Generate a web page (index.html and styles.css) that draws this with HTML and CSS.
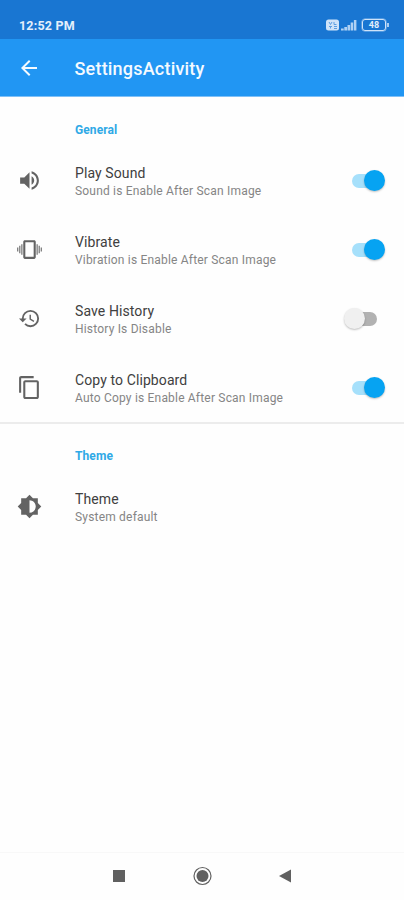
FILE: index.html
```
<!DOCTYPE html>
<html lang="en">
<head>
  <meta charset="UTF-8" />
  <meta name="viewport" content="width=device-width, initial-scale=1.0" />
  <title>SettingsActivity</title>
  <link rel="stylesheet" href="styles.css">
</head>
<body>
  <div class="statusbar">
    <span class="time">12:52 PM</span>
    <div class="status-icons">
      <svg class="volte" width="13" height="12" viewBox="0 0 13 12">
        <rect x="0" y="0.5" width="13" height="11" rx="2.5" fill="#cfe3f9"/>
        <path d="M3 3l1.500 2.500L6 3M8 3v2.500h2.500M3 7.500h3M4.500 7.500v2M8 9.500h3M8 7.500h3" fill="none" stroke="#5c9ee2" stroke-width="1"/>
      </svg>
      <svg class="signal" width="16" height="12" viewBox="0 0 16 12">
        <path d="M0 9.500h2.700V11.500H0zM3.300 8h2.700v3.500H3.300zM6.500 6h2.600v5.500H6.500zM9.700 3.500h2.500v8H9.700zM12.900 1h2.500v10.500h-2.500z" fill="#b0d1f4"/>
      </svg>
      <div class="battery">48</div>
    </div>
  </div>

  <div class="toolbar">
    <svg class="back" width="24" height="24" viewBox="0 0 24 24"><path d="M20 11H7.830l5.590-5.590L12 4l-8 8 8 8 1.410-1.410L7.830 13H20v-2z"/></svg>
    <h1>SettingsActivity</h1>
  </div>

  <div class="content">
    <h2>General</h2>
    <div class="row">
      <svg class="icon" viewBox="0 0 24 24"><path d="M3 9v6h4l5 5V4L7 9H3zm13.500 3c0-1.770-1.020-3.290-2.500-4.030v8.050c1.480-.73 2.500-2.250 2.500-4.020zM14 3.230v2.060c2.890.86 5 3.540 5 6.710s-2.110 5.850-5 6.710v2.060c4.010-.91 7-4.490 7-8.770s-2.990-7.860-7-8.770z"/></svg>
      <div class="text">
        <div class="title">Play Sound</div>
        <div class="summary">Sound is Enable After Scan Image</div>
      </div>
      <div class="switch on"></div>
    </div>
    <div class="row">
      <svg class="icon" viewBox="0 0 24 24">
        <path d="M16.500 3h-9C6.670 3 6 3.670 6 4.500v15c0 .83.670 1.500 1.500 1.500h9c.83 0 1.500-.67 1.500-1.500v-15c0-.83-.67-1.500-1.500-1.500zM16 19H8V5h8v14z"/>
        <path d="M0 10h1.300v4H0zM2 8.500h1.300v7H2zM4 7h1.300v10H4zM18.700 7H20v10h-1.300zM20.700 8.500H22v7h-1.300zM22.700 10H24v4h-1.300z" opacity="0.8"/>
      </svg>
      <div class="text">
        <div class="title">Vibrate</div>
        <div class="summary">Vibration is Enable After Scan Image</div>
      </div>
      <div class="switch on"></div>
    </div>
    <div class="row">
      <svg class="icon small" viewBox="0 0 24 24"><path d="M13 3a9 9 0 0 0-9 9H1l3.890 3.890.07.14L9 12H6c0-3.870 3.130-7 7-7s7 3.130 7 7-3.130 7-7 7c-1.930 0-3.680-.79-4.940-2.060l-1.420 1.420A8.954 8.954 0 0 0 13 21a9 9 0 0 0 0-18zm-1 5v5l4.280 2.540.72-1.210-3.500-2.080V8H12z"/></svg>
      <div class="text">
        <div class="title">Save History</div>
        <div class="summary">History Is Disable</div>
      </div>
      <div class="switch"></div>
    </div>
    <div class="row">
      <svg class="icon" viewBox="0 0 24 24"><path d="M16 1H4c-1.100 0-2 .9-2 2v14h2V3h12V1zm3 4H8c-1.100 0-2 .9-2 2v14c0 1.100.9 2 2 2h11c1.100 0 2-.9 2-2V7c0-1.100-.9-2-2-2zm0 16H8V7h11v14z"/></svg>
      <div class="text">
        <div class="title">Copy to Clipboard</div>
        <div class="summary">Auto Copy is Enable After Scan Image</div>
      </div>
      <div class="switch on"></div>
    </div>

    <div class="divider"></div>

    <h2 class="second">Theme</h2>
    <div class="row">
      <svg class="icon" viewBox="0 0 24 24"><path fill-rule="evenodd" d="M20 15.310L23.310 12 20 8.690V4h-4.690L12 .69 8.690 4H4v4.690L.69 12 4 15.310V20h4.690L12 23.310 15.310 20H20v-4.690zM12 18V6c3.310 0 6 2.690 6 6s-2.690 6-6 6z"/></svg>
      <div class="text">
        <div class="title">Theme</div>
        <div class="summary">System default</div>
      </div>
    </div>
  </div>

  <div class="navbar">
    <svg width="14" height="14" viewBox="0 0 14 14"><path d="M1 1h12v12H1z"/></svg>
    <svg width="20" height="20" viewBox="0 0 20 20"><circle cx="10.500" cy="10" r="8.500" fill="none" stroke="#606060" stroke-width="1.200"/><circle cx="10.500" cy="10" r="6"/></svg>
    <svg width="14" height="14" viewBox="0 0 14 14"><path d="M13 0.500v13L1 7z"/></svg>
  </div>
</body>
</html>
```
FILE: styles.css
```
* {
  box-sizing: border-box;
}
body {
  margin: 0;
  height: 900px;
  display: flex;
  flex-direction: column;
  font-family: Roboto, sans-serif;
  background: #fefefe;
  overflow: hidden;
}
.statusbar {
  height: 39px;
  padding: 11px 16px 0 19px;
  display: flex;
  align-items: center;
  justify-content: space-between;
  background: #1976d2;
  color: #e3effb;
}
.time {
  font-size: 12.5px;
  font-weight: 700;
  letter-spacing: 0.2px;
}
.status-icons {
  display: flex;
  align-items: center;
}
.signal {
  margin-left: 2px;
}
.battery {
  position: relative;
  width: 24px;
  height: 12px;
  margin: 0 2px 0 5px;
  border: 1.500px solid #cfe3f9;
  border-radius: 3px;
  box-shadow: 0 0 0 0.5px #8fbdec;
  font-size: 9px;
  font-weight: 700;
  line-height: 10px;
  text-align: center;
}
.battery::after {
  content: "";
  position: absolute;
  right: -4px;
  top: 3px;
  width: 2px;
  height: 4px;
  background: #a9cdf3;
}
.toolbar {
  height: 58px;
  padding-left: 17px;
  display: flex;
  align-items: center;
  background: #2196f3;
  border-bottom: 1px solid #7fc0f7;
  color: #f4faff;
}
.back {
  fill: #f4faff;
}
h1 {
  margin: 1px 0 0 33.5px;
  font-size: 18px;
  font-weight: 500;
  letter-spacing: 0.2px;
}
.content {
  flex: 1;
}
h2 {
  height: 49px;
  margin: 0;
  padding: 17px 0 0 75px;
  font-size: 12px;
  line-height: 33px;
  font-weight: 700;
  letter-spacing: 0.1px;
  color: #2fa9e6;
}
.second {
  height: 48px;
  padding-top: 16px;
}
.row {
  height: 69px;
  padding: 0 20px 0 17px;
  display: flex;
  align-items: center;
}
.icon {
  width: 25px;
  height: 25px;
  margin-right: 33px;
  fill: #636363;
}
.small {
  width: 23px;
  height: 23px;
  margin: 0 34px 0 1px;
}
.text {
  flex: 1;
  padding-top: 2px;
}
.title {
  font-size: 14px;
  line-height: 18px;
  letter-spacing: 0.1px;
  color: #404040;
}
.summary {
  font-size: 12px;
  line-height: 18px;
  letter-spacing: 0.19px;
  color: #858585;
}
.switch {
  position: relative;
  width: 25px;
  height: 14px;
  margin-right: 7px;
  border-radius: 7px;
  background: #b2b2b2;
}
.switch::after {
  content: "";
  position: absolute;
  left: -8px;
  top: -4px;
  width: 21px;
  height: 21px;
  border-radius: 50%;
  background: #f0f0f0;
  box-shadow: 0 1px 2px rgba(0,0,0,0.25);
}
.on {
  background: #a6e0fb;
}
.on::after {
  left: 12px;
  background: #06a3f2;
}
.divider {
  height: 2px;
  background: #ececec;
}
.navbar {
  height: 48px;
  padding-bottom: 1px;
  display: flex;
  align-items: center;
  justify-content: center;
  gap: 66px;
  border-top: 1px solid #f8f8f8;
  fill: #606060;
}
```
